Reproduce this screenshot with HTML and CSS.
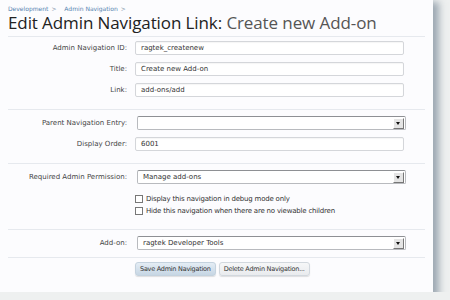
FILE: index.html
```html
<!DOCTYPE html>
<html lang="en">

<head>
    <meta charset="UTF-8">
    <title>Edit Admin Navigation Link</title>
    <link rel="stylesheet" href="styles.css">
</head>

<body>
    <div class="panel">
        <div class="breadcrumb">
            <a href="#">Development</a><span class="gt">&gt;</span>
            <a href="#">Admin Navigation</a><span class="gt">&gt;</span>
        </div>
        <h1>Edit Admin Navigation Link: <span class="sub">Create new Add-on</span></h1>

        <!-- basic info -->
        <div class="section first">
            <div class="row">
                <label>Admin Navigation ID:</label>
                <div class="input">ragtek_createnew</div>
            </div>
            <div class="row">
                <label>Title:</label>
                <div class="input">Create new Add-on</div>
            </div>
            <div class="row">
                <label>Link:</label>
                <div class="input">add-ons/add</div>
            </div>
        </div>

        <div class="section">
            <div class="row">
                <label>Parent Navigation Entry:</label>
                <div class="select"><span></span><i class="arrow"></i></div>
            </div>
            <div class="row">
                <label>Display Order:</label>
                <div class="input">6001</div>
            </div>
        </div>

        <div class="section">
            <div class="row">
                <label>Required Admin Permission:</label>
                <div class="select"><span>Manage add-ons</span><i class="arrow"></i></div>
            </div>
            <div class="row checks">
                <label></label>
                <div>
                    <div class="check"><i class="box"></i>Display this navigation in debug mode only</div>
                    <div class="check"><i class="box"></i>Hide this navigation when there are no viewable children</div>
                </div>
            </div>
        </div>

        <div class="section last">
            <div class="row">
                <label>Add-on:</label>
                <div class="select"><span>ragtek Developer Tools</span><i class="arrow"></i></div>
            </div>
        </div>

        <div class="buttons">
            <button class="btn primary">Save Admin Navigation</button>
            <button class="btn">Delete Admin Navigation...</button>
        </div>
    </div>
</body>

</html>
```

FILE: styles.css
```css
body {
    margin: 0;
    padding: 0;
    background-color: #eef0f0;
    font-family: "DejaVu Sans", Verdana, sans-serif;
    font-size: 7px;
    color: #333;
}

.panel {
    width: 417px;
    height: 292px;
    padding: 0 8px;
    background-color: #fcfcfe;
    box-shadow: 4px 4px 7px 2px rgba(80, 100, 120, 0.5);
}

.breadcrumb {
    padding-top: 5px;
    font-size: 6px;
}

.breadcrumb a {
    color: #5683b0;
    text-decoration: none;
}

.breadcrumb .gt {
    color: #7a8ea4;
    margin: 0 6px 0 3px;
}

h1 {
    margin: 1px 0 0 0;
    padding-bottom: 3px;
    font-family: "Open Sans", "Liberation Sans", sans-serif;
    font-weight: normal;
    font-size: 17px;
    line-height: 20px;
    letter-spacing: -0.1px;
    color: #222;
    border-bottom: 1px solid #e6e9ee;
}

h1 .sub {
    color: #555;
}

.section {
    border-bottom: 1px solid #e6e9ee;
    padding: 6px 0 12px 0;
    display: flex;
    flex-direction: column;
    gap: 7px;
}

.section.first {
    padding-top: 4px;
}

.section.last {
    padding-bottom: 7px;
}

.row {
    display: grid;
    grid-template-columns: 119px 269px;
    column-gap: 8px;
    align-items: center;
}

.row label {
    text-align: right;
    color: #444;
}

.input {
    height: 12px;
    line-height: 12px;
    padding: 0 5px;
    background-color: #fff;
    border: 1px solid #d4d6da;
    border-radius: 2px;
    box-shadow: inset 0 1px 1px rgba(0, 0, 0, 0.04);
    color: #333;
}

.select {
    height: 12px;
    width: 261px;
    margin-left: 2px;
    display: flex;
    align-items: center;
    justify-content: space-between;
    padding: 0 1px 0 5px;
    background-color: #fff;
    border: 1px solid #b8babe;
    border-top-color: #8e9094;
    border-radius: 2px;
    box-sizing: content-box;
}

.arrow {
    width: 9px;
    height: 9px;
    background-color: #e4e4e4;
    border: 1px solid;
    border-color: #fff #777 #777 #fff;
    position: relative;
}

.arrow::after {
    content: "";
    position: absolute;
    left: 2px;
    top: 3px;
    border-left: 2.5px solid transparent;
    border-right: 2.5px solid transparent;
    border-top: 3px solid #111;
}

.checks {
    align-items: start;
    margin-top: 2px;
}

.check {
    height: 12px;
    line-height: 12px;
    display: flex;
    align-items: center;
    gap: 3px;
    letter-spacing: -0.2px;
    color: #333;
}

.box {
    width: 6px;
    height: 6px;
    border: 1px solid #777;
    background-color: #fff;
}

.buttons {
    padding: 4px 0 0 127px;
    display: flex;
    gap: 3px;
}

.btn {
    height: 14px;
    padding: 0 4px;
    font-family: "DejaVu Sans", Verdana, sans-serif;
    font-size: 6.5px;
    letter-spacing: -0.25px;
    color: #333;
    border: 1px solid #d2d8de;
    border-radius: 3px;
    background: linear-gradient(#f6f7f8, #e9ebee);
    box-shadow: 0 1px 1px rgba(0, 0, 0, 0.12);
}

.btn.primary {
    background: linear-gradient(#e4edf5, #c6d6e4);
    border-color: #c4d2de;
}
```
